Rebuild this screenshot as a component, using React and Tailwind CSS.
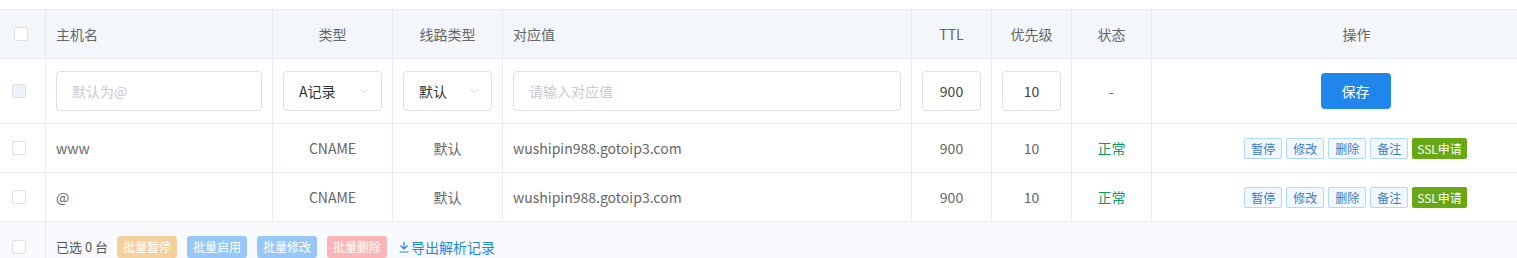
import { ChevronDown } from 'lucide-react';

const cols = 'grid grid-cols-[46px_227px_120px_110px_409px_80px_80px_80px_1fr]';
const cell = 'flex items-center border-r border-[#e8ebf2]';
const records = [
  { host: 'www', type: 'CNAME', line: '默认', value: 'wushipin988.gotoip3.com', ttl: 900, mx: 10 },
  { host: '@', type: 'CNAME', line: '默认', value: 'wushipin988.gotoip3.com', ttl: 900, mx: 10 },
];

function Box({ className = '' }) {
  return <span className={`block h-[14px] w-[14px] rounded-[2px] border border-[#dcdfe6] ${className}`} />;
}

function Select({ value }) {
  return (
    <div className="flex h-10 w-full items-center justify-between rounded border border-[#dcdfe6] bg-white pl-[15px] pr-[10px] text-[#333]">
      <span>{value}</span>
      <ChevronDown size={14} strokeWidth={1.25} className="text-[#c0c4cc]" />
    </div>
  );
}

function Tag({ children, green }) {
  return (
    <span
      className={
        green
          ? 'rounded-[2px] bg-[#67a814] px-[5px] text-[12px] leading-[21px] text-white'
          : 'rounded-[2px] border border-[#b3d8ff] bg-[#f2f8ff] px-[6px] text-[12px] leading-[19px] text-[#3a7cc5]'
      }
    >
      {children}
    </span>
  );
}

export default function App() {
  return (
    <div className="bg-white pt-[9px] text-[14px] text-[#666] font-['Microsoft_YaHei','Noto_Sans_CJK_SC',sans-serif]">
      <div className={`${cols} h-[50px] border-y border-[#e8ebf2] bg-[#f3f6fb]`}>
        <div className={`${cell} pl-[14px]`}><Box className="bg-white" /></div>
        <div className={`${cell} pl-[10px]`}>主机名</div>
        <div className={`${cell} justify-center`}>类型</div>
        <div className={`${cell} justify-center`}>线路类型</div>
        <div className={`${cell} pl-[10px]`}>对应值</div>
        <div className={`${cell} justify-center`}>TTL</div>
        <div className={`${cell} justify-center`}>优先级</div>
        <div className={`${cell} justify-center`}>状态</div>
        <div className="flex items-center justify-center pl-[44px]">操作</div>
      </div>

      <div className={`${cols} h-[65px] border-b border-[#e8ebf2]`}>
        <div className={`${cell} pl-[12px]`}><Box className="bg-[#edf1fa]" /></div>
        <div className={`${cell} px-[10px]`}>
          <div className="flex h-10 w-full items-center rounded border border-[#dcdfe6] pl-[15px] text-[#c8cad0]">默认为@</div>
        </div>
        <div className={`${cell} px-[10px]`}><Select value="A记录" /></div>
        <div className={`${cell} px-[10px]`}><Select value="默认" /></div>
        <div className={`${cell} px-[10px]`}>
          <div className="flex h-10 w-full items-center rounded border border-[#dcdfe6] pl-[15px] text-[#c8cad0]">请输入对应值</div>
        </div>
        <div className={`${cell} px-[10px]`}>
          <div className="flex h-10 w-full items-center justify-center rounded border border-[#dcdfe6] text-[#444]">900</div>
        </div>
        <div className={`${cell} px-[10px]`}>
          <div className="flex h-10 w-full items-center justify-center rounded border border-[#dcdfe6] text-[#444]">10</div>
        </div>
        <div className={`${cell} justify-center`}>-</div>
        <div className="flex items-center justify-center pl-[42px]">
          <button className="h-9 w-[70px] rounded bg-[#2186eb] text-white">保存</button>
        </div>
      </div>

      {records.map((r) => (
        <div key={r.host} className={`${cols} h-[49px] border-b border-[#e8ebf2]`}>
          <div className={`${cell} pl-[12px]`}><Box className="bg-white" /></div>
          <div className={`${cell} pl-[10px]`}>{r.host}</div>
          <div className={`${cell} justify-center`}>{r.type}</div>
          <div className={`${cell} justify-center`}>{r.line}</div>
          <div className={`${cell} pl-[10px]`}>{r.value}</div>
          <div className={`${cell} justify-center`}>{r.ttl}</div>
          <div className={`${cell} justify-center`}>{r.mx}</div>
          <div className={`${cell} justify-center text-[#0c9c62]`}>正常</div>
          <div className="flex items-center justify-center gap-[4px] pl-[42px]">
            <Tag>暂停</Tag>
            <Tag>修改</Tag>
            <Tag>删除</Tag>
            <Tag>备注</Tag>
            <Tag green>SSL申请</Tag>
          </div>
        </div>
      ))}

      <div className="grid h-[50px] grid-cols-[46px_1fr] bg-[#f9fafd]">
        <div className={`${cell} pl-[12px]`}><Box className="bg-white" /></div>
        <div className="flex items-center pl-[10px]">
          <span className="mr-[9px] text-[13px] text-[#555]">已选 0 台</span>
          <div className="flex gap-[10px] text-[12px] text-white">
            <span className="rounded-[3px] bg-[#f3d19e] px-[6px] leading-[22px]">批量暂停</span>
            <span className="rounded-[3px] bg-[#96c7f7] px-[6px] leading-[22px]">批量启用</span>
            <span className="rounded-[3px] bg-[#96c7f7] px-[6px] leading-[22px]">批量修改</span>
            <span className="rounded-[3px] bg-[#fab6b6] px-[6px] leading-[22px]">批量删除</span>
          </div>
          <span className="ml-[12px] flex items-center gap-[2px] text-[#1e88e5]">
            <svg width="10" height="12" viewBox="0 0 10 12" fill="none" stroke="currentColor" strokeWidth="1.2">
              <path d="M5 1v7M1.5 4.5 5 8l3.5-3.5M0.5 11h9" />
            </svg>
            导出解析记录
          </span>
        </div>
      </div>
    </div>
  );
}
